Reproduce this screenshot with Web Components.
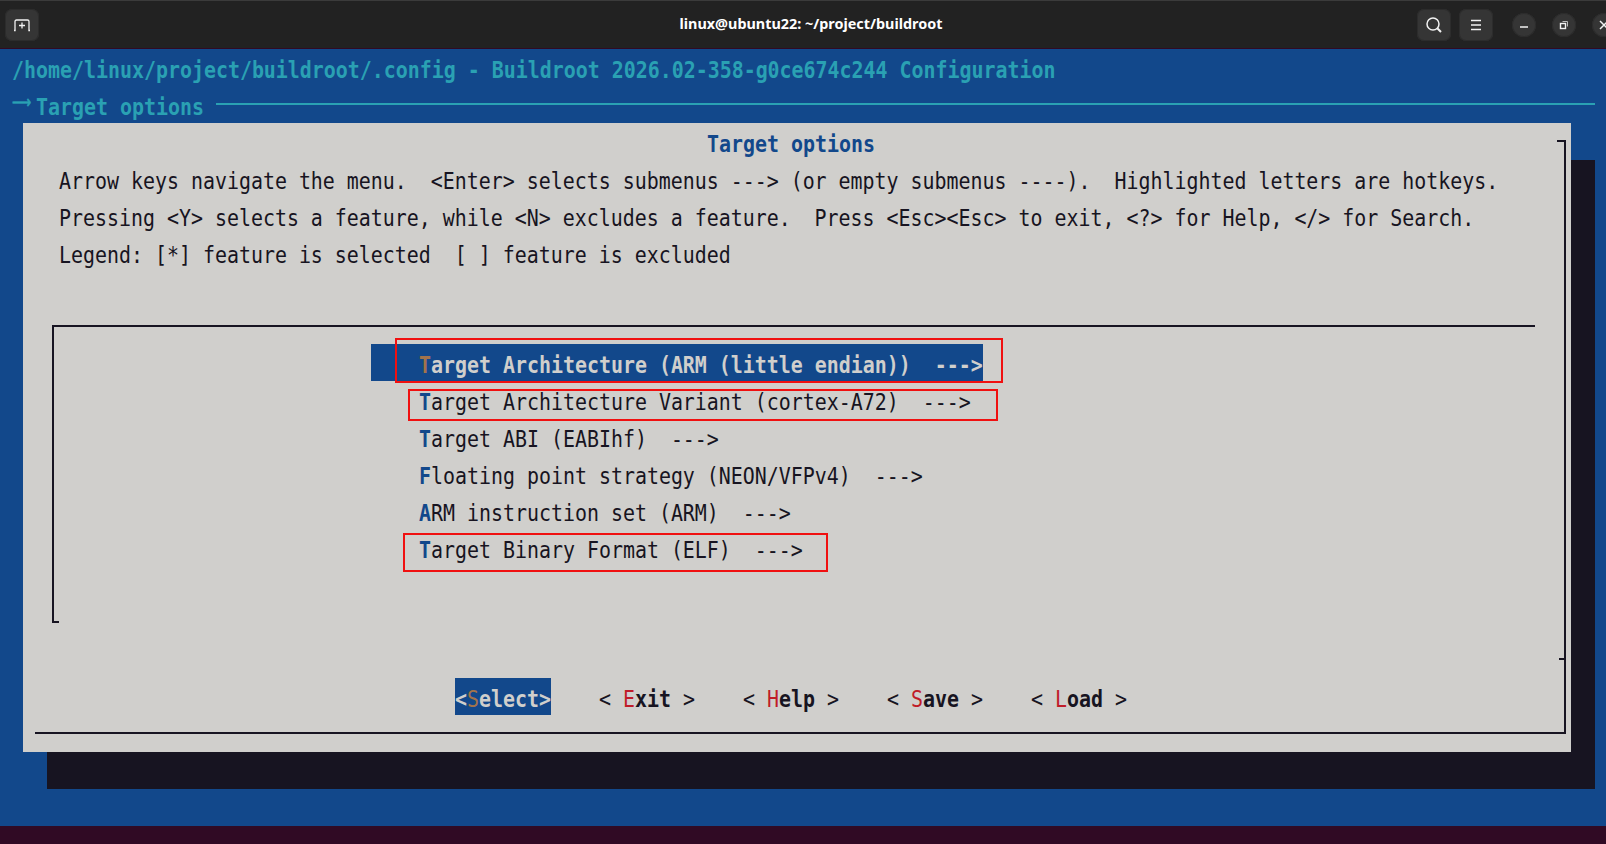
<!DOCTYPE html>
<html>
<head>
<meta charset="utf-8">
<title>buildroot menuconfig</title>
<style>
    html, body{
        margin: 0;
        height: 100%;
        overflow: hidden;
        background: #300a24;
    }
</style>
</head>
<body>
<terminal-window>
    <span slot="title">linux@ubuntu22: ~/project/buildroot</span>

    <screen-line>/home/linux/project/buildroot/.config - Buildroot 2026.02-358-g0ce674c244 Configuration</screen-line>
    <crumb-line>Target options</crumb-line>

    <kconfig-dialog heading="Target options">
        <span slot="help">Arrow keys navigate the menu.  &lt;Enter&gt; selects submenus ---&gt; (or empty submenus ----).  Highlighted letters are hotkeys.</span>
        <span slot="help">Pressing &lt;Y&gt; selects a feature, while &lt;N&gt; excludes a feature.  Press &lt;Esc&gt;&lt;Esc&gt; to exit, &lt;?&gt; for Help, &lt;/&gt; for Search.</span>
        <span slot="help">Legend: [*] feature is selected  [ ] feature is excluded</span>

        <menu-entry slot="menu" hotkey="T" selected>arget Architecture (ARM (little endian))  ---&gt;</menu-entry>
        <menu-entry slot="menu" hotkey="T">arget Architecture Variant (cortex-A72)  ---&gt;</menu-entry>
        <menu-entry slot="menu" hotkey="T">arget ABI (EABIhf)  ---&gt;</menu-entry>
        <menu-entry slot="menu" hotkey="F">loating point strategy (NEON/VFPv4)  ---&gt;</menu-entry>
        <menu-entry slot="menu" hotkey="A">RM instruction set (ARM)  ---&gt;</menu-entry>
        <menu-entry slot="menu" hotkey="T">arget Binary Format (ELF)  ---&gt;</menu-entry>

        <dialog-button slot="buttons" hotkey="S" selected>elect</dialog-button>
        <dialog-button slot="buttons" hotkey="E">xit</dialog-button>
        <dialog-button slot="buttons" hotkey="H">elp</dialog-button>
        <dialog-button slot="buttons" hotkey="S">ave</dialog-button>
        <dialog-button slot="buttons" hotkey="L">oad</dialog-button>
    </kconfig-dialog>

    <mark-box style="left:395px;top:338px;width:608px;height:45px"></mark-box>
    <mark-box style="left:408px;top:389px;width:590px;height:32px"></mark-box>
    <mark-box style="left:403px;top:533px;width:425px;height:39px"></mark-box>
</terminal-window>

<script>
const MONO = `"DejaVu Sans Mono", "Liberation Mono", monospace`;
// terminal font is narrower and taller than DejaVu, so stretch the text rows a bit
const ROW_SHIFT = `translateY(3.5px) scaleY(1.13)`;
const CELL_TEXT = `
    .text{
        display: block;
        white-space: pre;
        transform: ${ROW_SHIFT};
    }
`;

class TerminalWindow extends HTMLElement{
    constructor(){
        super();
        this.attachShadow({mode: "open"});
        this.shadowRoot.innerHTML = `
        <style>
            :host{
                display: flex;
                flex-direction: column;
                width: 1606px;
                height: 844px;
                position: relative;
                overflow: hidden;
                background: #300a24;
            }
            header{
                flex: none;
                height: 48px;
                box-sizing: border-box;
                border-top: 1px solid #3b3b3b;
                background: #222222;
                display: flex;
                align-items: center;
                padding: 0 0 0 5px;
                color: #ffffff;
                font: 700 14.4px "Noto Sans", sans-serif;
            }
            .title{
                flex: 1;
                text-align: center;
                padding: 0 0 2px 166px;
                white-space: nowrap;
            }
            .tools{
                display: flex;
                align-items: center;
                gap: 8px;
                margin-right: 19px;
            }
            .win{
                display: flex;
                gap: 16px;
                margin-right: -10px;
            }
            .rule{
                flex: none;
                height: 1px;
                background: #300a24;
            }
            main{
                flex: none;
                height: 777px;
                background: #12488b;
            }
            .bottom{
                flex: 1;
            }
            svg{
                display: block;
                fill: none;
                stroke: #f2f2f2;
                stroke-width: 1.5;
            }
        </style>
        <header>
            <bar-button>
                <svg width="16" height="14" viewBox="0 0 16 14">
                    <path d="M1 12.5V3.5Q1 2 2.5 2H13.5Q15 2 15 3.5V12.5M0 12.5H1.7M14.300 12.500H16M8 4.500V10.500M5 7.500H11" stroke-width="1.300"/>
                </svg>
            </bar-button>
            <div class="title"><slot name="title"></slot></div>
            <div class="tools">
                <bar-button>
                    <svg width="18" height="18" viewBox="0 0 18 18">
                        <circle cx="8" cy="8" r="6"/>
                        <path d="M12.300 12.300L16 16" stroke-width="2"/>
                    </svg>
                </bar-button>
                <bar-button>
                    <svg width="12" height="12" viewBox="0 0 12 12">
                        <path d="M1 1.500H11M1 6H11M1 10.500H11"/>
                    </svg>
                </bar-button>
            </div>
            <div class="win">
                <bar-button round>
                    <svg width="10" height="10" viewBox="0 0 10 10"><path d="M1 7H9" stroke-width="1.500"/></svg>
                </bar-button>
                <bar-button round>
                    <svg width="10" height="10" viewBox="0 0 10 10"><rect x="1.500" y="3.500" width="5" height="5" stroke-width="1.400"/><path d="M3.500 1.500H8.500V6.500" stroke-width="1" stroke="#bbbbbb"/></svg>
                </bar-button>
                <bar-button round>
                    <svg width="10" height="10" viewBox="0 0 10 10"><path d="M1 1L9 9M9 1L1 9" stroke-width="1.500"/></svg>
                </bar-button>
            </div>
        </header>
        <div class="rule"></div>
        <main><slot></slot></main>
        <div class="bottom"></div>
        `;
    }
}

class BarButton extends HTMLElement{
    constructor(){
        super();
        this.attachShadow({mode: "open"});
        this.shadowRoot.innerHTML = `
        <style>
            :host{
                display: flex;
                align-items: center;
                justify-content: center;
                flex: none;
                width: 34px;
                height: 32px;
                box-sizing: border-box;
                border-radius: 7px;
                background: #353535;
                box-shadow: inset 0 0 0 1px #2c2c2c;
            }
            :host([round]){
                width: 24px;
                height: 24px;
                border-radius: 50%;
            }
        </style>
        <slot></slot>
        `;
    }
}

class ScreenLine extends HTMLElement{
    constructor(){
        super();
        this.attachShadow({mode: "open"});
        this.shadowRoot.innerHTML = `
        <style>
            :host{
                display: block;
                height: 37px;
                padding-left: 12px;
                color: #2aa1b3;
                font: 700 19.93px/37px ${MONO};
            }
            ${CELL_TEXT}
        </style>
        <span class="text"><slot></slot></span>
        `;
    }
}

class CrumbLine extends HTMLElement{
    constructor(){
        super();
        this.attachShadow({mode: "open"});
        this.shadowRoot.innerHTML = `
        <style>
            :host{
                display: flex;
                height: 37px;
                padding-left: 12px;
                color: #2aa1b3;
                font: 700 19.93px/37px ${MONO};
            }
            ${CELL_TEXT}
            .arrow{
                display: block;
                flex: none;
                width: 24px;
                overflow: hidden;
                font: 400 13.4px/34px "DejaVu Sans", sans-serif;
                white-space: pre;
                -webkit-text-stroke: 0.5px #2aa1b3;
                transform: scaleY(1.3);
            }
            .rule{
                width: 1379px;
                height: 2px;
                margin: 17px 0 0 12px;
                background: #2aa1b3;
            }
        </style>
        <span class="arrow">⟶</span>
        <span class="text"><slot></slot></span>
        <span class="rule"></span>
        `;
    }
}

class KconfigDialog extends HTMLElement{
    constructor(){
        super();
        this.attachShadow({mode: "open"});
        this.shadowRoot.innerHTML = `
        <style>
            :host{
                display: block;
                width: 1548px;
                height: 629px;
                margin-left: 23px;
                padding-top: 17px;
                box-sizing: border-box;
                background: #d0cfcc;
                box-shadow: 24px 37px 0 #171421;
                color: #171421;
                font: 400 19.93px/37px ${MONO};
            }
            ${CELL_TEXT}
            .frame{
                display: flow-root;
                position: relative;
                box-sizing: border-box;
                height: 594px;
                margin: 0 5px 0 12px;
                border-right: 2px solid #171421;
                border-bottom: 2px solid #171421;
            }
            .frame::before{
                content: "";
                position: absolute;
                right: 0;
                top: 0;
                width: 7px;
                height: 2px;
                background: #171421;
            }
            .tick{
                position: absolute;
                right: 0;
                top: 518px;
                width: 5px;
                height: 2px;
                background: #171421;
            }
            .body{
                margin: -17px 0 0 -12px;
            }
            h1{
                margin: 0;
                height: 37px;
                padding-left: 684px;
                color: #12488b;
                font: inherit;
                font-weight: 700;
            }
            .help{
                display: flex;
                flex-direction: column;
                padding-left: 36px;
            }
            .help ::slotted(span){
                height: 37px;
                white-space: pre;
                transform: ${ROW_SHIFT};
            }
            .box{
                position: relative;
                box-sizing: border-box;
                width: 1483px;
                height: 298px;
                margin: 54px 0 0 29px;
                padding: 17px 0 0 317px;
                border-top: 2px solid #171421;
                border-left: 2px solid #171421;
            }
            .box::after{
                content: "";
                position: absolute;
                left: 0;
                bottom: 0;
                width: 5px;
                height: 2px;
                background: #171421;
            }
            .buttons{
                display: flex;
                gap: 48px;
                margin: 55px 0 0 432px;
            }
        </style>
        <div class="frame">
            <span class="tick"></span>
            <div class="body">
                <h1 class="text" id="heading"></h1>
                <div class="help"><slot name="help"></slot></div>
                <div class="box"><slot name="menu"></slot></div>
                <div class="buttons"><slot name="buttons"></slot></div>
            </div>
        </div>
        `;
    }
    connectedCallback(){
        this.shadowRoot.getElementById("heading").textContent = this.getAttribute("heading");
    }
}

class MenuEntry extends HTMLElement{
    constructor(){
        super();
        this.attachShadow({mode: "open"});
        this.shadowRoot.innerHTML = `
        <style>
            :host{
                display: block;
                width: 612px;
                height: 37px;
                padding-left: 48px;
                box-sizing: border-box;
            }
            ${CELL_TEXT}
            b{
                color: #12488b;
            }
            :host([selected]){
                background: #12488b;
                color: #d0cfcc;
                font-weight: 700;
            }
            :host([selected]) b{
                color: #a2734c;
            }
        </style>
        <span class="text"><b id="key"></b><slot></slot></span>
        `;
    }
    connectedCallback(){
        this.shadowRoot.getElementById("key").textContent = this.getAttribute("hotkey");
    }
}

class DialogButton extends HTMLElement{
    constructor(){
        super();
        this.attachShadow({mode: "open"});
        this.shadowRoot.innerHTML = `
        <style>
            :host{
                display: block;
                width: 96px;
                height: 37px;
                font-weight: 700;
            }
            ${CELL_TEXT}
            i{
                font-style: normal;
                font-weight: 400;
                color: #c01c28;
            }
            .edge{
                font-weight: 400;
            }
            :host([selected]){
                background: #12488b;
                color: #d0cfcc;
            }
            :host([selected]) .edge{
                font-weight: 700;
            }
            :host([selected]) i{
                color: #a2734c;
            }
        </style>
        <span class="text"><span class="edge" id="open"></span><i id="key"></i><slot></slot><span class="edge" id="close"></span></span>
        `;
    }
    connectedCallback(){
        const picked = this.hasAttribute("selected");
        this.shadowRoot.getElementById("key").textContent = this.getAttribute("hotkey");
        this.shadowRoot.getElementById("open").textContent = picked ? "<" : "< ";
        this.shadowRoot.getElementById("close").textContent = picked ? ">" : " >";
    }
}

class MarkBox extends HTMLElement{
    constructor(){
        super();
        this.attachShadow({mode: "open"});
        this.shadowRoot.innerHTML = `
        <style>
            :host{
                display: block;
                position: absolute;
                box-sizing: border-box;
                border: 2px solid #f01010;
                pointer-events: none;
            }
        </style>
        `;
    }
}

customElements.define("terminal-window", TerminalWindow);
customElements.define("bar-button", BarButton);
customElements.define("screen-line", ScreenLine);
customElements.define("crumb-line", CrumbLine);
customElements.define("kconfig-dialog", KconfigDialog);
customElements.define("menu-entry", MenuEntry);
customElements.define("dialog-button", DialogButton);
customElements.define("mark-box", MarkBox);
</script>
</body>
</html>
